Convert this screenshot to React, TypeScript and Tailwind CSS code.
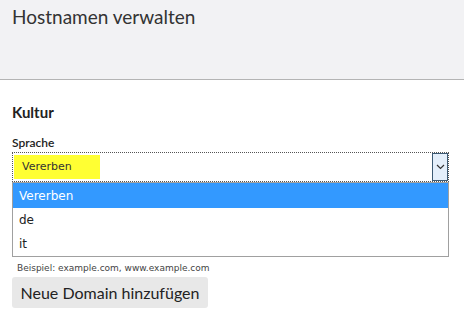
export default function App() {
  return (
    <div className="w-[464px] h-[329px] bg-white font-['Lato',sans-serif] text-[#333]">
      <div className="h-[80px] bg-[#f2f2f4] border-b border-[#b4b4b4] px-3 pt-[3px]">
        <h1 className="text-[19px] leading-[28px] text-[#333]">Hostnamen verwalten</h1>
      </div>
      <div className="px-3 pt-[23px]">
        <h2 className="text-[15px] font-bold leading-[19px] text-[#222]">Kultur</h2>
        <div className="mt-[13px] text-[12px] font-semibold leading-[16px] text-[#222]">Sprache</div>
        <div className="mt-[1px] relative w-[437px]">
          <div className="flex h-[30px] border border-dotted border-[#555] bg-white">
            <div className="flex-1 flex items-center">
              <span className="ml-[1px] h-[24px] w-[86px] bg-[#ffff33] flex items-center pl-[8px] text-[11px] font-['DejaVu_Sans',sans-serif] text-[#333]">
                Vererben
              </span>
            </div>
            <div className="w-[16px] border border-[#3c5a74] bg-[#e4effb] flex items-center justify-center">
              <svg width="9" height="6" viewBox="0 0 9 6">
                <path d="M1 1l3.5 3.5L8 1" fill="none" stroke="#333" strokeWidth="1.2" />
              </svg>
            </div>
          </div>
          <div className="border border-[#a0a0a0] font-['DejaVu_Sans',sans-serif] text-[12px]">
            <div className="h-[25px] bg-[#3399ff] text-white flex items-center pl-[6px]">Vererben</div>
            <div className="h-[24px] flex items-center pl-[6px] text-[#222]">de</div>
            <div className="h-[24px] flex items-center pl-[6px] text-[#222]">it</div>
          </div>
        </div>
        <div className="mt-[5px] pl-[5px] text-[9px] leading-[12px] text-[#444] font-['DejaVu_Sans',sans-serif]">
          Beispiel: example.com, www.example.com
        </div>
        <button className="mt-[3px] h-[31px] w-[196px] rounded-[3px] bg-[#e8e8e8] text-[16px] text-[#222] flex items-center justify-center">
          Neue Domain hinzufügen
        </button>
      </div>
    </div>
  );
}
